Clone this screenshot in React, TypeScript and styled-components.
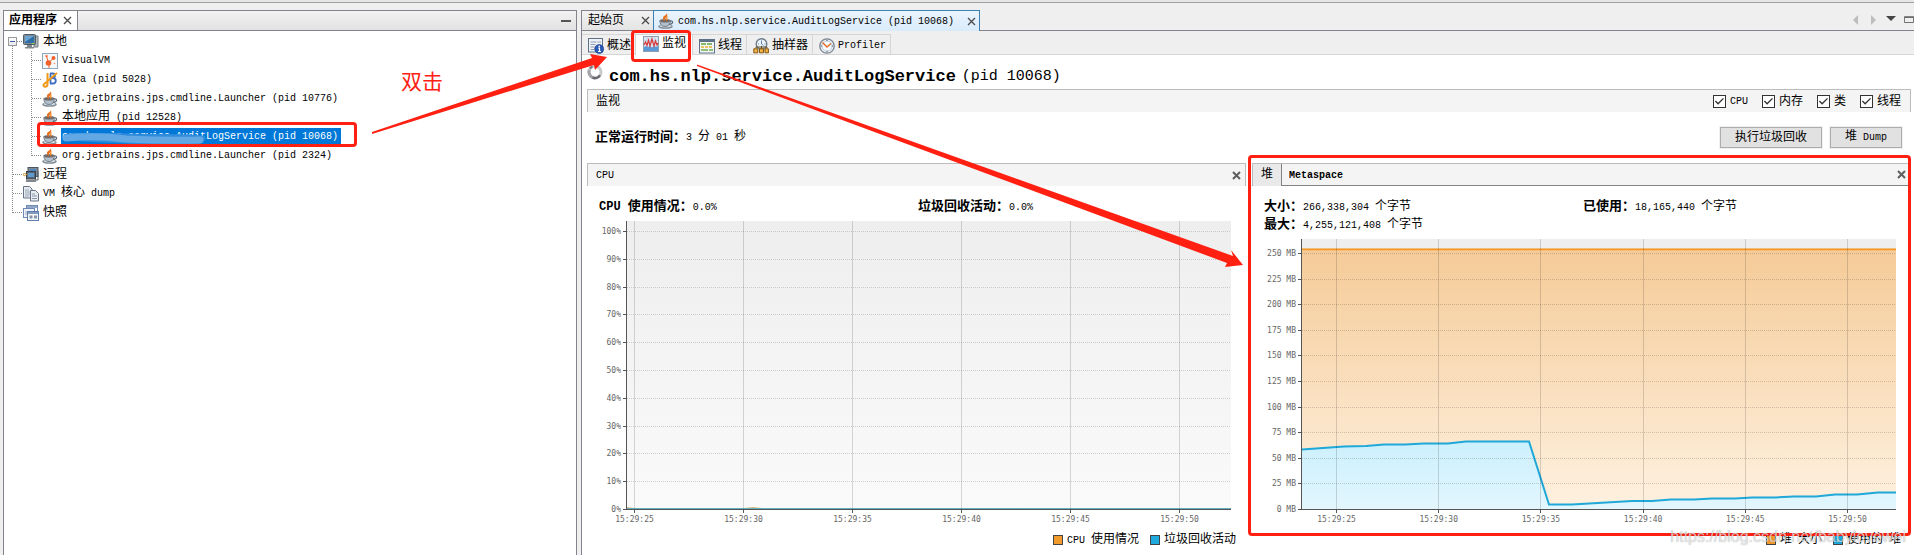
import React from "react";
import styled, { createGlobalStyle, css } from "styled-components";

const RED = "#ff2012";
const LINE = "#83838e";
const SANS = `"Liberation Mono", "Noto Sans CJK SC", monospace`;

const GlobalStyle = createGlobalStyle`
  * { box-sizing: border-box; }
  body {
    margin: 0;
    background: #efefef;
    color: #000;
    font-family: ${SANS};
    font-size: 12px;
    line-height: 18px;
    overflow: hidden;
  }
  button { font: inherit; color: inherit; cursor: default; }
  h1, h2, ul, dl, dd, dt { margin: 0; padding: 0; font-size: inherit; font-weight: inherit; }
  ul { list-style: none; }
`;

/* ---------- text ---------- */

const Run = styled.span<{ $size: number }>`
  font-size: ${(p) => p.$size}px;
`;

const TextLine = styled.span`
  white-space: pre;
`;

/* Latin runs are set smaller than the Chinese ones so that two of their cells fill one square. */
function Mixed({ text, latin = 10, cjk = 12 }: { text: string; latin?: number; cjk?: number }) {
  const runs = text.match(/[\u2e80-\uffff]+|[^\u2e80-\uffff]+/g) ?? [];
  return (
    <TextLine>
      {runs.map((run, i) => (
        <Run key={i} $size={/[\u2e80-\uffff]/.test(run) ? cjk : latin}>
          {run}
        </Run>
      ))}
    </TextLine>
  );
}

/* ---------- icons ---------- */

const Icon = styled.svg.attrs({ width: 16, height: 16, viewBox: "0 0 16 16", "aria-hidden": true })`
  flex: none;
  display: block;
`;

const JavaIcon = () => (
  <Icon>
    <ellipse cx="7.500" cy="13.500" rx="7.300" ry="2.300" fill="#7f8a94" />
    <ellipse cx="7.500" cy="13" rx="6" ry="1.500" fill="#d5dce2" />
    <path d="M1.800 7.500h10.600c0 3.500-1.800 6-5.300 6s-5.300-2.500-5.300-6z" fill="#b3bfca" stroke="#5d6b78" strokeWidth=".8" />
    <ellipse cx="7.100" cy="7.800" rx="5.200" ry="1.500" fill="#7a6458" stroke="#71808e" strokeWidth=".7" />
    <path d="M12.300 8c3.300-.6 3.200 3-1.200 3.400" fill="none" stroke="#5d6b78" strokeWidth="1.200" />
    <path d="M8.600 0C9.500 2 4.600 3 4.900 5.200c.1 1.300 1.200 1.900 1.600 2.800C7 6.600 6.800 5.800 7.900 4.800 9.200 3.600 10 1.600 8.600 0z" fill="#e8701b" />
    <path d="M10.200 3C8.200 4.200 7.600 5 7.900 6c.2.7.6 1 .4 2 1.600-1 1.300-1.800 1.100-2.500-.2-.8.3-1.500.8-2.500z" fill="#f08a2c" />
  </Icon>
);

const ComputerIcon = () => (
  <Icon>
    <path d="M11 2h4v11h-4z" fill="#b4b8bb" stroke="#777d82" />
    <rect x=".5" y=".5" width="12" height="10" rx="1" fill="#7d8a93" stroke="#4d5b66" />
    <rect x="2" y="2" width="9" height="7" fill="#2f6da8" />
    <path d="M2 2h9L2 8z" fill="#6aa5d6" />
    <path d="M9 9.500h2" stroke="#8ee03c" />
    <path d="M4 11h5v2H4zM2 13h9v1.500H2z" fill="#80878c" />
  </Icon>
);

const VisualVmIcon = () => (
  <Icon>
    <rect x=".5" y=".5" width="15" height="15" fill="#f6f9fb" stroke="#8ca6bd" />
    <circle cx="6.500" cy="10" r="2.800" fill="#f2602a" />
    <circle cx="11.500" cy="5" r="2" fill="#f2602a" />
    <circle cx="4.500" cy="3" r="1.300" fill="#f58a5c" />
    <circle cx="12.500" cy="10.500" r=".8" fill="#f58a5c" />
    <path d="M6.500 10l5-5M6.500 10l-2-7M7 12v3" stroke="#f2602a" />
  </Icon>
);

const IdeaIcon = () => (
  <Icon>
    <path d="M8 1.500h2.800q2.200 0 2.200 2.200T10.800 6q3 0 3 2.700T10.800 11.500H8M8 6h3M8.500 1.500v10" fill="none" stroke="#3f6fc0" strokeWidth="1.800" />
    <path d="M5.500 1v11q0 2.800-2.300 2.800-2 0-1.600-2.300L15 1" fill="none" stroke="#f09a1c" strokeWidth="2" />
  </Icon>
);

const RemoteIcon = () => (
  <Icon>
    <rect x="5" y=".5" width="10" height="9" fill="#7f8c98" stroke="#4b5661" />
    <rect x="7" y="2" width="6" height="4" fill="#4d86bd" />
    <path d="M15 4v9h-3" fill="none" stroke="#555f68" />
    <rect x="3.500" y="4.500" width="9" height="7.500" fill="#5b6874" stroke="#37424c" />
    <rect x="5" y="6" width="6" height="4" fill="#5c9ad2" />
    <path d="M3 13h10v2H3z" fill="#82888d" />
    <circle cx="1.500" cy="7.500" r="1.200" fill="none" stroke="#c8902c" />
    <path d="M3 7.500h1.500" stroke="#c8902c" />
  </Icon>
);

const CoreDumpIcon = () => (
  <Icon>
    <path d="M.5.5h6L9 3v9H.5z" fill="#e8ecf1" stroke="#667485" />
    <path d="M2 4h4M2 6h5M2 8h5M2 10h4" stroke="#9aa7b8" />
    <path d="M7.500 4.500h5l3 3V15h-8z" fill="#e8ecf1" stroke="#667485" />
    <path d="M9 8h3M9 10h5M9 12.500h5" stroke="#8a99ad" />
  </Icon>
);

const SnapshotIcon = () => (
  <Icon>
    <rect x="3.500" y=".5" width="11" height="9" fill="#fff" stroke="#6f8ab5" />
    <path d="M3.500 2h11" stroke="#6f8ab5" strokeWidth="1.500" />
    <rect x=".5" y="3.500" width="11" height="9" fill="#eef2f8" stroke="#6f8ab5" />
    <path d="M2 7h4M2 9h3" stroke="#97a8c4" />
    <rect x="4.500" y="6.500" width="11" height="9" fill="#f4f7fb" stroke="#5f7dad" />
    <path d="M4.500 8h11" stroke="#5f7dad" strokeWidth="1.500" />
    <path d="M6.500 10.500h3v3h-3zM11 10.500h3v3h-3z" fill="#8795aa" />
  </Icon>
);

const OverviewIcon = () => (
  <Icon>
    <rect x=".5" y=".5" width="14" height="13.500" fill="#eef1f5" stroke="#5f7288" />
    <path d="M2.500 4h6M2.500 6.500h5M2.500 9h4M2.500 11.500h4M9.500 4h3.500" stroke="#8fa1b5" />
    <circle cx="11.200" cy="11" r="4.500" fill="#2a59b5" stroke="#173a84" strokeWidth=".6" />
    <path d="M10.300 10.200h1.200v3.300m-1.500 0h3" stroke="#fff" strokeWidth="1.200" fill="none" />
    <circle cx="11.200" cy="8.400" r=".8" fill="#fff" />
  </Icon>
);

const MonitorIcon = () => (
  <Icon>
    <rect x=".5" y=".5" width="15" height="15" fill="#dce8f4" stroke="#8d9eaf" />
    <path d="M1 4.500h14M4 1v14M8 1v14M12 1v14" stroke="#b9cbdd" strokeWidth=".6" />
    <path d="M1 11l2-1 2 1 2-1 2 1.500 2-1.500 2 1 2-1v5H1z" fill="#5b9ad8" />
    <path d="M1 9l1.500-3L4 9.500 5.500 4 7 10l2-7 2 7 1.500-5L14 9l1-2" fill="none" stroke="#d8393a" strokeWidth="1.200" />
  </Icon>
);

const ThreadsIcon = () => (
  <Icon>
    <rect x=".5" y="1.500" width="15" height="13.500" fill="#f4f6f8" stroke="#5d7288" />
    <path d="M1 3h14" stroke="#5d7288" strokeWidth="2" />
    <path d="M2 6h12" stroke="#5fa83c" strokeWidth="1.500" strokeDasharray="5 1" />
    <path d="M2 9h12" stroke="#e3b32c" strokeWidth="1.500" strokeDasharray="3 1" />
    <path d="M2 12h12" stroke="#6fae4a" strokeWidth="1.500" strokeDasharray="7 1" />
  </Icon>
);

const SamplerIcon = () => (
  <Icon>
    <circle cx="8.500" cy="6" r="5.300" fill="#eef3f8" stroke="#6d7c8b" strokeWidth="1.400" />
    <path d="M8.500 2.500V6l2 1.500M5 6h1M11.500 6h1" stroke="#5a87b8" fill="none" />
    <path d="M3 10v-1h11v1M8.500 8v3" stroke="#5c4a25" fill="none" />
    <path d="M.8 10.800h4v4h-4zM6.500 10.800h4v4h-4zM12 10.800h3.400v4H12z" fill="#f3b545" stroke="#84540d" />
  </Icon>
);

const ProfilerIcon = () => (
  <Icon>
    <circle cx="8" cy="8" r="7.200" fill="#e9edf1" stroke="#7a848e" strokeWidth="1.300" />
    <circle cx="8" cy="8" r="5" fill="#f9fbfd" stroke="#a9c4de" strokeWidth=".7" />
    <path d="M3.500 4.500L8 9l4-3.500" fill="none" stroke="#e4702a" strokeWidth="1.500" />
    <path d="M8 1.800v1.400M8 12.800v1.400M1.800 8h1.400M12.800 8h1.400" stroke="#5d6a76" />
  </Icon>
);

const SpinnerIcon = () => (
  <Icon>
    <circle cx="8" cy="8" r="6" fill="none" stroke="#c9c9cc" strokeWidth="3" />
    <path d="M2.300 6A6 6 0 0 0 8 14" fill="none" stroke="#a3a3a9" strokeWidth="3" />
    <path d="M5.500 13.500A6 6 0 0 0 13 11.300" fill="none" stroke="#66676f" strokeWidth="2.400" />
    <path d="M3 4.500A6 6 0 0 1 5.500 2.500" fill="none" stroke="#7b7c84" strokeWidth="2.200" />
  </Icon>
);

const CrossSvg = styled.svg`
  display: block;
`;

function Cross({ bold = false }: { bold?: boolean }) {
  return (
    <CrossSvg width="9" height="9" viewBox="0 0 9 9" aria-hidden>
      <path d="M1 1l7 7M8 1l-7 7" stroke={bold ? "#5e5e5e" : "#4a4a4a"} strokeWidth={bold ? 2 : 1.3} />
    </CrossSvg>
  );
}

const PlainButton = styled.button`
  display: flex;
  align-items: center;
  justify-content: center;
  padding: 0;
  border: 0;
  background: none;
`;

/* ---------- window frame ---------- */

const Window = styled.div`
  position: relative;
  display: flex;
  flex-direction: column;
  min-height: 100vh;
  min-width: 1200px;
  border-top: 2px solid #e6e6e6;
`;

const Split = styled.div`
  flex: 1;
  display: flex;
  gap: 4px;
  padding: 7px 0 0 3px;
  border-top: 1px solid #a0a0a0;
`;

/* ---------- applications panel ---------- */

const Sidebar = styled.aside`
  flex: 0 0 574px;
  display: flex;
  flex-direction: column;
  border: 1px solid ${LINE};
  border-bottom: 0;
  background: #fff;
`;

const SidebarHeader = styled.header`
  display: flex;
  height: 20px;
  border-bottom: 1px solid ${LINE};
  background: linear-gradient(#f2f2f2, #e2e2e2);
`;

const SidebarTab = styled.div`
  display: flex;
  align-items: center;
  gap: 6px;
  padding: 0 5px;
  border-right: 1px solid ${LINE};
  background: #fff;
  font-weight: 700;
`;

const MinimizeButton = styled(PlainButton)`
  margin-left: auto;
  width: 21px;
  &::before {
    content: "";
    width: 10px;
    height: 2px;
    background: #555;
  }
`;

const Tree = styled.ul`
  position: relative;
  padding: 1px 0 0 19px;
  &::before {
    content: "";
    position: absolute;
    left: 8px;
    top: 14px;
    bottom: 9px;
    border-left: 1px dotted #8c8c8c;
  }
`;

const Branch = styled.ul`
  position: relative;
  padding-left: 19px;
  &::before {
    content: "";
    position: absolute;
    left: 8px;
    top: 0;
    bottom: 9px;
    border-left: 1px dotted #8c8c8c;
  }
`;

const Node = styled.div<{ $selected?: boolean }>`
  position: relative;
  display: flex;
  align-items: center;
  gap: 3px;
  width: max-content;
  height: 19px;
  &::before {
    content: "";
    position: absolute;
    left: -10px;
    width: 9px;
    top: 9px;
    border-top: 1px dotted #8c8c8c;
  }
  ${(p) =>
    p.$selected &&
    css`
      color: #fff;
    `}
`;

const NodeLabel = styled.span<{ $selected?: boolean }>`
  position: relative;
  display: flex;
  align-items: center;
  height: 18px;
  padding: 0 3px 0 1px;
  background: ${(p) => (p.$selected ? "#0078d7" : "transparent")};
`;

const Expander = styled.button`
  position: absolute;
  z-index: 1;
  left: -15px;
  top: 5px;
  width: 9px;
  height: 9px;
  padding: 0;
  border: 1px solid #9a9a9a;
  background: linear-gradient(#fff, #e9e9e9);
  &::before {
    content: "";
    position: absolute;
    left: 1px;
    top: 3px;
    width: 5px;
    height: 1px;
    background: #3b5da8;
  }
`;

const Smear = styled.svg`
  position: absolute;
  left: 0;
  top: 4px;
`;

const Highlight = styled.div<{ $inset: string }>`
  position: absolute;
  z-index: 3;
  inset: ${(p) => p.$inset};
  border: 3px solid ${RED};
  border-radius: 4px;
  pointer-events: none;
`;

const children = [
  { icon: <VisualVmIcon />, text: "VisualVM" },
  { icon: <IdeaIcon />, text: "Idea (pid 5028)" },
  { icon: <JavaIcon />, text: "org.jetbrains.jps.cmdline.Launcher (pid 10776)" },
  { icon: <JavaIcon />, text: "本地应用 (pid 12528)" },
  { icon: <JavaIcon />, text: "com.hs.nlp.service.AuditLogService (pid 10068)", selected: true },
  { icon: <JavaIcon />, text: "org.jetbrains.jps.cmdline.Launcher (pid 2324)" },
];

function Applications() {
  return (
    <Sidebar>
      <SidebarHeader>
        <SidebarTab>
          <Mixed text="应用程序" />
          <PlainButton aria-label="关闭">
            <Cross />
          </PlainButton>
        </SidebarTab>
        <MinimizeButton aria-label="最小化" />
      </SidebarHeader>
      <Tree>
        <li>
          <Node>
            <Expander aria-label="折叠" />
            <ComputerIcon />
            <NodeLabel>
              <Mixed text="本地" />
            </NodeLabel>
          </Node>
          <Branch>
            {children.map((c, i) => (
              <li key={i}>
                <Node $selected={c.selected}>
                  {c.icon}
                  <NodeLabel $selected={c.selected}>
                    <Mixed text={c.text} />
                    {c.selected && (
                      <Smear width="146" height="13" viewBox="0 0 146 13" aria-hidden>
                        <path
                          d="M1 5Q8 0 18 1q20 0 36 0 20 1 44 1 22 0 36 1l10 1q1 6-6 8-32 1-62 0-30-1-60-3Q0 10 1 5z"
                          fill="#2f8bdb"
                        />
                        <path d="M5 6q30-3 60 1 40 2 74 1" stroke="#62a8e4" strokeWidth="7" fill="none" strokeLinecap="round" />
                      </Smear>
                    )}
                  </NodeLabel>
                  {c.selected && <Highlight $inset="-5px -16px -1px -5px" />}
                </Node>
              </li>
            ))}
          </Branch>
        </li>
        <li>
          <Node>
            <RemoteIcon />
            <NodeLabel>
              <Mixed text="远程" />
            </NodeLabel>
          </Node>
        </li>
        <li>
          <Node>
            <CoreDumpIcon />
            <NodeLabel>
              <Mixed text="VM 核心 dump" />
            </NodeLabel>
          </Node>
        </li>
        <li>
          <Node>
            <SnapshotIcon />
            <NodeLabel>
              <Mixed text="快照" />
            </NodeLabel>
          </Node>
        </li>
      </Tree>
    </Sidebar>
  );
}

/* ---------- document area ---------- */

const Documents = styled.main`
  flex: 1;
  min-width: 0;
  display: flex;
  flex-direction: column;
  border-left: 1px solid ${LINE};
  background: #fff;
`;

const DocumentTabs = styled.div`
  display: flex;
  height: 21px;
  border-bottom: 1px solid ${LINE};
  background: #efefef;
`;

const DocumentTab = styled.div<{ $active?: boolean }>`
  display: flex;
  align-items: center;
  gap: 4px;
  padding: 0 3px 0 6px;
  border-top: 1px solid ${LINE};
  background: linear-gradient(#f2f2f2, #e4e4e4);
  button {
    margin-left: ${(p) => (p.$active ? 9 : 13)}px;
  }
  ${(p) =>
    p.$active &&
    css`
      margin-bottom: -1px;
      padding: 0 3px 0 4px;
      border: 1px solid #3c7fb1;
      border-bottom: 0;
      background: linear-gradient(#eaf4fd, #d9ebfb);
    `}
`;

const TabControls = styled.div`
  display: flex;
  margin-left: auto;
`;

const ControlButton = styled(PlainButton)`
  width: 18px;
  overflow: hidden;
  justify-content: flex-start;
  padding-left: 3px;
  &:last-child {
    width: 13px;
  }
`;

const ViewTabs = styled.div`
  display: flex;
  height: 24px;
  padding-top: 3px;
  border-bottom: 1px solid #d6d6d6;
  background: #efefef;
`;

const ViewTab = styled.button<{ $active?: boolean }>`
  position: relative;
  display: flex;
  align-items: center;
  gap: 3px;
  padding: 2px 4px 0 6px;
  border: 0;
  border-top: 1px solid #d6d6d6;
  border-right: 1px solid #d6d6d6;
  background: #efefef;
  ${(p) =>
    p.$active &&
    css`
      padding: 0 6px 2px 7px;
      margin-bottom: -1px;
      background: #fff;
    `}
`;

const Page = styled.section`
  padding: 0 3px 0 5px;
`;

const Title = styled.h1`
  display: flex;
  align-items: center;
  gap: 6px;
  height: 34px;
  line-height: 24px;
  b,
  span {
    margin-top: 10px;
  }
`;

const TitleName = styled.b`
  font-size: 17px;
`;

const TitlePid = styled.span`
  font-size: 15px;
`;

const SectionBar = styled.div`
  display: flex;
  align-items: center;
  justify-content: space-between;
  height: 23px;
  padding: 1px 9px 0 8px;
  border: 1px solid #bcbcbc;
  border-bottom: 0;
  background: #f4f4f4;
`;

const Checks = styled.div`
  display: flex;
  gap: 14px;
`;

const Check = styled.label`
  display: flex;
  align-items: center;
  gap: 4px;
`;

const Box = styled.input`
  appearance: none;
  position: relative;
  width: 13px;
  height: 13px;
  margin: 0;
  border: 1px solid #333;
  background: #fff;
  &:checked::before {
    content: "";
    position: absolute;
    inset: 1px;
    background: #333;
    clip-path: polygon(0 50%, 10% 40%, 35% 65%, 90% 10%, 100% 20%, 35% 85%);
  }
`;

const Uptime = styled.div`
  display: flex;
  align-items: center;
  justify-content: space-between;
  height: 51px;
  padding: 0 9px 0 8px;
`;

const Actions = styled.div`
  display: flex;
  gap: 8px;
`;

const Action = styled.button`
  display: flex;
  align-items: center;
  height: 21px;
  padding: 0 14px;
  border: 1px solid #adadad;
  background: #e1e1e1;
  outline: 1px solid #f0f0f0;
`;

const Pair = styled.dl`
  display: flex;
  align-items: center;
  height: 18px;
  white-space: pre;
  dt {
    font-weight: 700;
  }
`;

function Fact({ label, value }: { label: string; value: string }) {
  return (
    <Pair>
      <dt>
        <Mixed text={label} latin={12} cjk={13} />
      </dt>
      <dd>
        <Mixed text={value} />
      </dd>
    </Pair>
  );
}

/* ---------- chart panels ---------- */

const Panels = styled.div`
  display: grid;
  grid-template-columns: 1fr 1fr;
  gap: 6px;
`;

const Panel = styled.section`
  position: relative;
  min-width: 0;
`;

const PanelBar = styled(SectionBar)<{ $tabbed?: boolean }>`
  padding: 0 4px 0 8px;
  ${(p) =>
    p.$tabbed &&
    css`
      padding: 0 4px 0 0;
      border-bottom: 1px solid #828282;
    `}
`;

const PanelTabs = styled.div`
  display: flex;
  align-self: stretch;
`;

const PanelTab = styled.button<{ $active?: boolean }>`
  display: flex;
  align-items: center;
  padding: 2px 7px 0;
  border: 0;
  background: none;
  font-weight: ${(p) => (p.$active ? 400 : 700)};
  ${(p) =>
    p.$active &&
    css`
      margin-bottom: -1px;
      padding: 0 8px;
      border-right: 1px solid #828282;
      background: #e9e9e9;
    `}
`;

const Facts = styled.div`
  display: grid;
  grid-template-columns: 1fr 1fr;
  margin: 12px 9px 5px 12px;
`;

const Plot = styled.div<{ $gutter: number }>`
  padding: 0 15px 22px ${(p) => p.$gutter}px;
`;

const PlotSvg = styled.svg`
  display: block;
  width: 100%;
  overflow: visible;
  text {
    font-family: "DejaVu Sans Mono", monospace;
    font-size: 8px;
    fill: #666;
  }
`;

const Legend = styled.ul`
  display: flex;
  justify-content: flex-end;
  gap: 11px;
  padding-right: 10px;
  li {
    display: flex;
    align-items: center;
    gap: 4px;
    height: 18px;
  }
`;

const Swatch = styled.i<{ $color: string }>`
  width: 10px;
  height: 10px;
  border: 1px solid #444;
  background: ${(p) => p.$color};
`;

const TIMES = ["15:29:25", "15:29:30", "15:29:35", "15:29:40", "15:29:45", "15:29:50"];

type ChartProps = {
  id: string;
  width: number;
  height: number;
  firstX: number;
  stepX: number;
  yTicks: { label: string; y: number }[];
  children: React.ReactNode;
};

/* Series are given in plot units of width x height and stretch with the panel. */
function Chart({ id, width, height, firstX, stepX, yTicks, children }: ChartProps) {
  const xs = TIMES.map((t, i) => ({ t, x: `${((firstX + i * stepX) / width) * 100}%` }));
  return (
    <PlotSvg height={height} role="img" aria-label={id}>
      <defs>
        <linearGradient id={`${id}-bg`} x1="0" y1="0" x2="0" y2="1">
          <stop offset="0" stopColor="#eeeeee" />
          <stop offset="1" stopColor="#fafafa" />
        </linearGradient>
      </defs>
      <rect width="100%" height={height} fill={`url(#${id}-bg)`} />
      <svg width="100%" height={height} viewBox={`0 0 ${width} ${height}`} preserveAspectRatio="none">
        {children}
      </svg>
      <g shapeRendering="crispEdges">
        {yTicks.map((k) => (
          <React.Fragment key={k.label}>
            <line x1="0" x2="100%" y1={k.y + 0.5} y2={k.y + 0.5} stroke="#000" strokeOpacity=".17" strokeDasharray="1 1" />
            <line x1="-4" x2="0" y1={k.y + 0.5} y2={k.y + 0.5} stroke="#555" />
          </React.Fragment>
        ))}
        {xs.map(({ t, x }) => (
          <React.Fragment key={t}>
            <line x1={x} x2={x} y1="0" y2={height} stroke="#000" strokeOpacity=".15" />
            <line x1={x} x2={x} y1={height} y2={height + 4} stroke="#555" />
          </React.Fragment>
        ))}
        <line x1="-0.5" x2="-0.5" y1="0" y2={height + 1} stroke="#555" />
        <line x1="-1" x2="100%" y1={height + 0.5} y2={height + 0.5} stroke="#555" />
      </g>
      {yTicks.map((k) => (
        <text key={k.label} x="-6" y={k.y + 3} textAnchor="end">
          {k.label}
        </text>
      ))}
      {xs.map(({ t, x }) => (
        <text key={t} x={x} y={height + 13} textAnchor="middle">
          {t}
        </text>
      ))}
    </PlotSvg>
  );
}

const cpuTicks = Array.from({ length: 11 }, (_, i) => ({
  label: `${i * 10}%`,
  y: Math.round(288 - i * 27.8),
}));

const heapTicks = Array.from({ length: 11 }, (_, i) => ({
  label: `${i * 25} MB`,
  y: Math.round(270 - i * 25.6),
}));

const usedHeap =
  "0,210.5 42,207.5 64,207 82,205.5 103,205.5 122,204.5 146,204.5 164,202.5 227,202.5 247,265.5 270,265.5 330,262 350,262 369,260.5 392,260.5 410,259.5 433,259.5 450,258.5 473,258.5 492,257.5 514,257.5 533,255.5 555,255.5 576,253.5 594,253.5";

function CpuPanel() {
  return (
    <Panel>
      <PanelBar>
        <Mixed text="CPU" />
        <PlainButton aria-label="关闭">
          <Cross bold />
        </PlainButton>
      </PanelBar>
      <Facts>
        <Fact label="CPU 使用情况：" value="0.0%" />
        <Fact label="垃圾回收活动：" value="0.0%" />
      </Facts>
      <Plot $gutter={40}>
        <Chart id="cpu" width={604} height={288} firstX={7.5} stepX={109} yTicks={cpuTicks}>
          <path d="M0 286l14 2H0zM108 288l18-2 18 2z" fill="#d9b877" />
          <path d="M0 287.500h604" stroke="#62b0bd" />
        </Chart>
      </Plot>
      <Legend>
        <li>
          <Swatch $color="#f39a2c" />
          <Mixed text="CPU 使用情况" />
        </li>
        <li>
          <Swatch $color="#20a9dc" />
          <Mixed text="垃圾回收活动" />
        </li>
      </Legend>
    </Panel>
  );
}

function HeapPanel() {
  return (
    <Panel>
      <PanelBar $tabbed>
        <PanelTabs>
          <PanelTab $active>
            <Mixed text="堆" />
          </PanelTab>
          <PanelTab>
            <Mixed text="Metaspace" />
          </PanelTab>
        </PanelTabs>
        <PlainButton aria-label="关闭">
          <Cross bold />
        </PlainButton>
      </PanelBar>
      <Facts>
        <Fact label="大小：" value="266,338,304 个字节" />
        <Fact label="已使用：" value="18,165,440 个字节" />
        <Fact label="最大：" value="4,255,121,408 个字节" />
      </Facts>
      <Plot $gutter={50}>
        <Chart id="heap" width={594} height={270} firstX={34.5} stepX={102.2} yTicks={heapTicks}>
          <defs>
            <linearGradient id="heap-size" x1="0" y1="0" x2="0" y2="1">
              <stop offset="0" stopColor="#f5cb98" />
              <stop offset="1" stopColor="#fef1e0" />
            </linearGradient>
            <linearGradient id="heap-used" x1="0" y1="0" x2="0" y2="1">
              <stop offset="0" stopColor="#ccf0fd" />
              <stop offset="1" stopColor="#e2f6fd" />
            </linearGradient>
          </defs>
          <rect y="10" width="594" height="260" fill="url(#heap-size)" />
          <path d="M0 10.500h594" stroke="#f7bd74" strokeWidth="3" />
          <path d="M0 10.500h594" stroke="#f0962c" strokeWidth="1" />
          <polygon points={`${usedHeap} 594,270 0,270`} fill="url(#heap-used)" />
          <polyline points={usedHeap} fill="none" stroke="#1fa8d8" strokeWidth="2" vectorEffect="non-scaling-stroke" />
        </Chart>
      </Plot>
      <Legend>
        <li>
          <Swatch $color="#f39a2c" />
          <Mixed text="堆 大小" />
        </li>
        <li>
          <Swatch $color="#20a9dc" />
          <Mixed text="使用的 堆" />
        </li>
      </Legend>
      <Highlight $inset="-8px 0 13px -4px" />
    </Panel>
  );
}

/* ---------- annotations over the window ---------- */

const Arrows = styled.svg`
  position: absolute;
  z-index: 4;
  left: 0;
  top: -2px;
  pointer-events: none;
`;

const Note = styled.div`
  position: absolute;
  z-index: 4;
  left: 401px;
  top: 64px;
  color: ${RED};
  font-family: "Noto Sans CJK SC", sans-serif;
  font-size: 21px;
  line-height: 28px;
`;

const Watermark = styled.div`
  position: absolute;
  z-index: 5;
  right: 8px;
  top: 525px;
  color: rgba(255, 255, 255, 0.7);
  text-shadow: 0 0 1px rgba(0, 0, 0, 0.4);
  font-family: "Liberation Sans", sans-serif;
  font-size: 16px;
  line-height: 20px;
`;

const views = [
  { icon: <OverviewIcon />, text: "概述" },
  { icon: <MonitorIcon />, text: "监视", active: true },
  { icon: <ThreadsIcon />, text: "线程" },
  { icon: <SamplerIcon />, text: "抽样器" },
  { icon: <ProfilerIcon />, text: "Profiler" },
];

export default function App() {
  return (
    <Window>
      <GlobalStyle />
      <Split>
        <Applications />
        <Documents>
          <DocumentTabs>
            <DocumentTab>
              <Mixed text="起始页" />
              <PlainButton aria-label="关闭">
                <Cross />
              </PlainButton>
            </DocumentTab>
            <DocumentTab $active>
              <JavaIcon />
              <Mixed text="com.hs.nlp.service.AuditLogService (pid 10068)" />
              <PlainButton aria-label="关闭">
                <Cross />
              </PlainButton>
            </DocumentTab>
            <TabControls>
              <ControlButton aria-label="向左滚动">
                <svg width="12" height="10" viewBox="0 0 12 10">
                  <path d="M8 0v10L3 5z" fill="#bdbdbd" />
                </svg>
              </ControlButton>
              <ControlButton aria-label="向右滚动">
                <svg width="12" height="10" viewBox="0 0 12 10">
                  <path d="M3 0v10l5-5z" fill="#bdbdbd" />
                </svg>
              </ControlButton>
              <ControlButton aria-label="文档列表">
                <svg width="10" height="10" viewBox="0 0 10 10">
                  <path d="M0 1h10L5 6z" fill="#444" />
                </svg>
              </ControlButton>
              <ControlButton aria-label="最大化">
                <svg width="12" height="10" viewBox="0 0 12 10">
                  <path d="M.5 1h11v7H.5zM.5 2h11" fill="none" stroke="#555" />
                </svg>
              </ControlButton>
            </TabControls>
          </DocumentTabs>
          <ViewTabs>
            {views.map((v) => (
              <ViewTab key={v.text} $active={v.active}>
                {v.icon}
                <Mixed text={v.text} />
                {v.active && <Highlight $inset="-5px 1px -7px -5px" />}
              </ViewTab>
            ))}
          </ViewTabs>
          <Page>
            <Title>
              <SpinnerIcon />
              <TitleName>com.hs.nlp.service.AuditLogService</TitleName>
              <TitlePid>(pid 10068)</TitlePid>
            </Title>
            <SectionBar>
              <Mixed text="监视" />
              <Checks>
                {["CPU", "内存", "类", "线程"].map((c) => (
                  <Check key={c}>
                    <Box type="checkbox" defaultChecked />
                    <Mixed text={c} />
                  </Check>
                ))}
              </Checks>
            </SectionBar>
            <Uptime>
              <Fact label="正常运行时间：" value="3 分 01 秒" />
              <Actions>
                <Action>
                  <Mixed text="执行垃圾回收" />
                </Action>
                <Action>
                  <Mixed text="堆 Dump" />
                </Action>
              </Actions>
            </Uptime>
            <Panels>
              <CpuPanel />
              <HeapPanel />
            </Panels>
          </Page>
        </Documents>
      </Split>
      <Arrows width="1260" height="280" viewBox="0 0 1260 280" aria-hidden>
        <path d="M372 132L592 58 590 54 607 57 595 70 594 65 372 134z" fill={RED} />
        <path d="M697 64.500L1233 256 1231 250 1243 265 1225 267 1227 263 697 66z" fill={RED} />
      </Arrows>
      <Note>双击</Note>
      <Watermark>https://blog.csdn.net/babylovewei</Watermark>
    </Window>
  );
}
